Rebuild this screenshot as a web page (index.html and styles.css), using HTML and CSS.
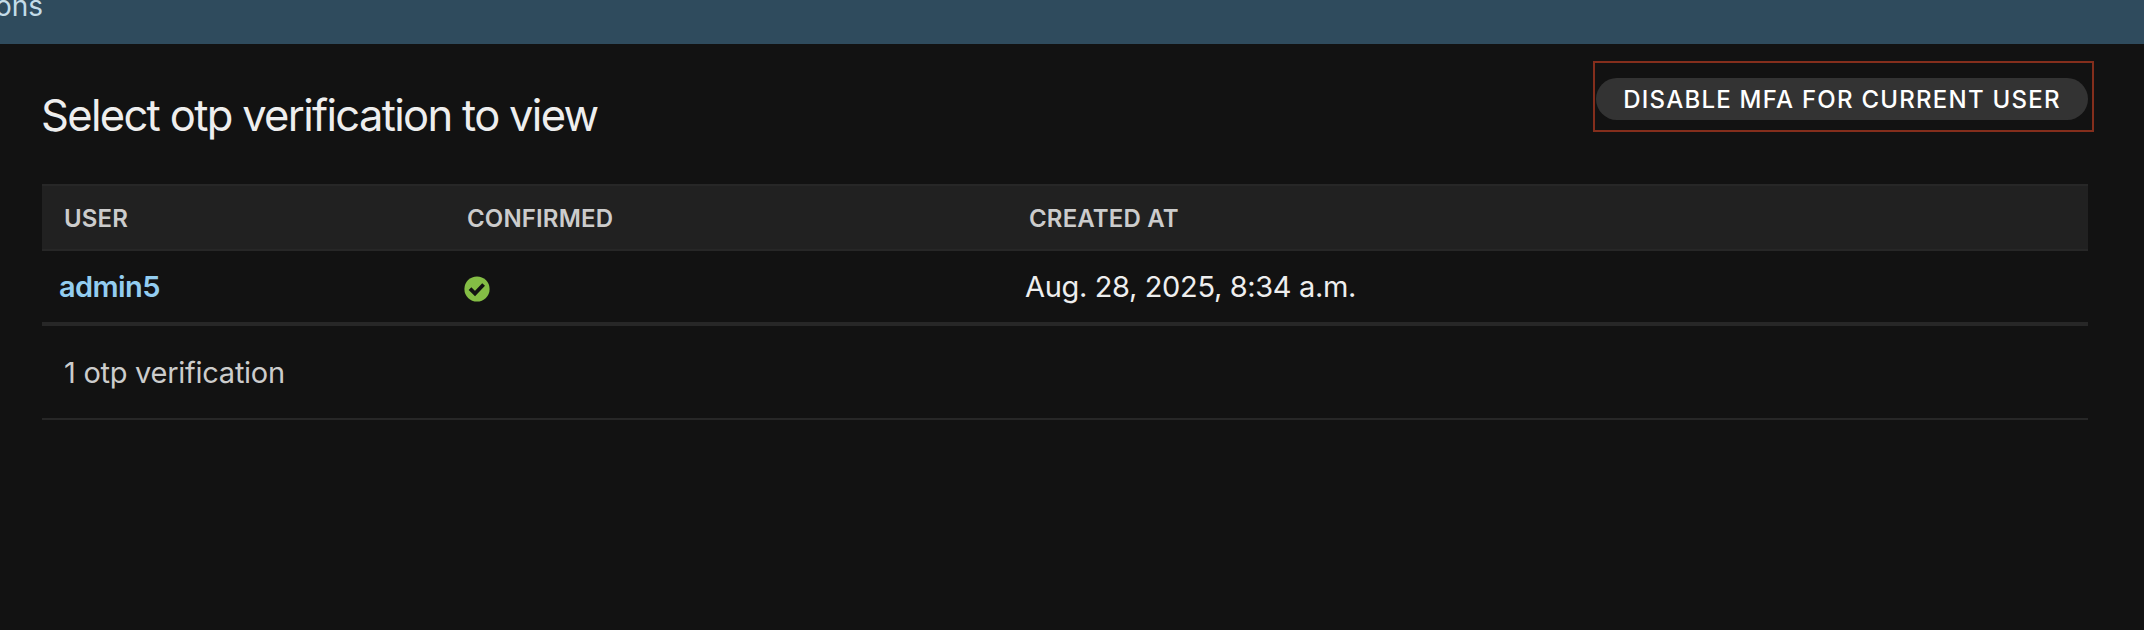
FILE: index.html
```html
<!DOCTYPE html>
<html lang="en">
<head>
<meta charset="utf-8">
<title>Select otp verification to view</title>
<link rel="stylesheet" href="styles.css">
</head>
<body>
<nav class="breadcrumbs"><span class="crumb">ons</span></nav>
<main class="content">
  <header class="page-head">
    <h1 class="title">Select otp verification to view</h1>
    <div class="tools"><a class="tool-link">DISABLE MFA FOR CURRENT USER</a></div>
  </header>
  <section class="results">
    <div class="row head">
      <span>USER</span><span>CONFIRMED</span><span>CREATED AT</span>
    </div>
    <div class="row record">
      <a class="user">admin5</a>
      <span class="confirmed"><svg width="26" height="26" viewBox="0 0 26 26"><circle cx="13" cy="13" r="12.6" fill="#84bd45"/><path d="M6 12.6l5 5 8.6-9.1" fill="none" stroke="#121212" stroke-width="3.8"/></svg></span>
      <span class="created">Aug. 28, 2025, 8:34 a.m.</span>
    </div>
  </section>
  <p class="paginator">1 otp verification</p>
</main>
</body>
</html>
```

FILE: styles.css
```css
* { box-sizing: border-box; }
body {
  margin: 0;
  height: 630px;
  overflow: hidden;
  background: #121212;
  color: #eee;
  font-family: Inter, "Liberation Sans", sans-serif;
}
.breadcrumbs {
  height: 44px;
  display: flex;
  align-items: flex-start;
  overflow: hidden;
  background: #2f4b5d;
  color: #c4dce8;
  font-size: 28px;
  line-height: 32px;
}
.crumb { margin: -10px 0 0 -5px; }
.content { padding: 17px 50px 0 42px; }
.page-head {
  display: flex;
  justify-content: space-between;
  align-items: flex-start;
  height: 123px;
}
.title {
  margin: 28px 0 0 -1px;
  font-size: 43.5px;
  line-height: 52px;
  font-weight: 400;
  letter-spacing: -1.68px;
  white-space: nowrap;
}
.tools {
  width: 501px;
  height: 71px;
  padding: 15px 4px 0 1px;
  border: 2px solid #842e1c;
}
.tool-link {
  display: block;
  width: 492px;
  height: 42px;
  border-radius: 21px;
  background: #333;
  color: #fff;
  font-size: 24px;
  line-height: 44px;
  font-weight: 500;
  letter-spacing: 1.25px;
  text-align: center;
  white-space: nowrap;
}
.results { width: 2046px; }
.row {
  display: grid;
  grid-template-columns: 403px 562px 1fr;
  align-items: center;
}
.head {
  height: 67px;
  padding: 2px 0 0 22px;
  border-top: 2px solid #272727;
  border-bottom: 2px solid #272727;
  background: #212121;
  color: #ccc;
  font-size: 24px;
  font-weight: 600;
  letter-spacing: .15px;
}
.record {
  height: 75px;
  padding-left: 17px;
  border-bottom: 4px solid #272727;
  font-size: 29px;
}
.user { color: #93cdf0; font-weight: 600; letter-spacing: -.6px; }
.confirmed { display: flex; padding: 5px 0 0 2px; }
.created { padding-left: 1px; font-weight: 400; letter-spacing: -.35px; }
.paginator {
  width: 2046px;
  height: 94px;
  margin: 0;
  padding-left: 22px;
  border-bottom: 2px solid #272727;
  color: #ccc;
  font-size: 29px;
  letter-spacing: -.27px;
  line-height: 94px;
}
```
